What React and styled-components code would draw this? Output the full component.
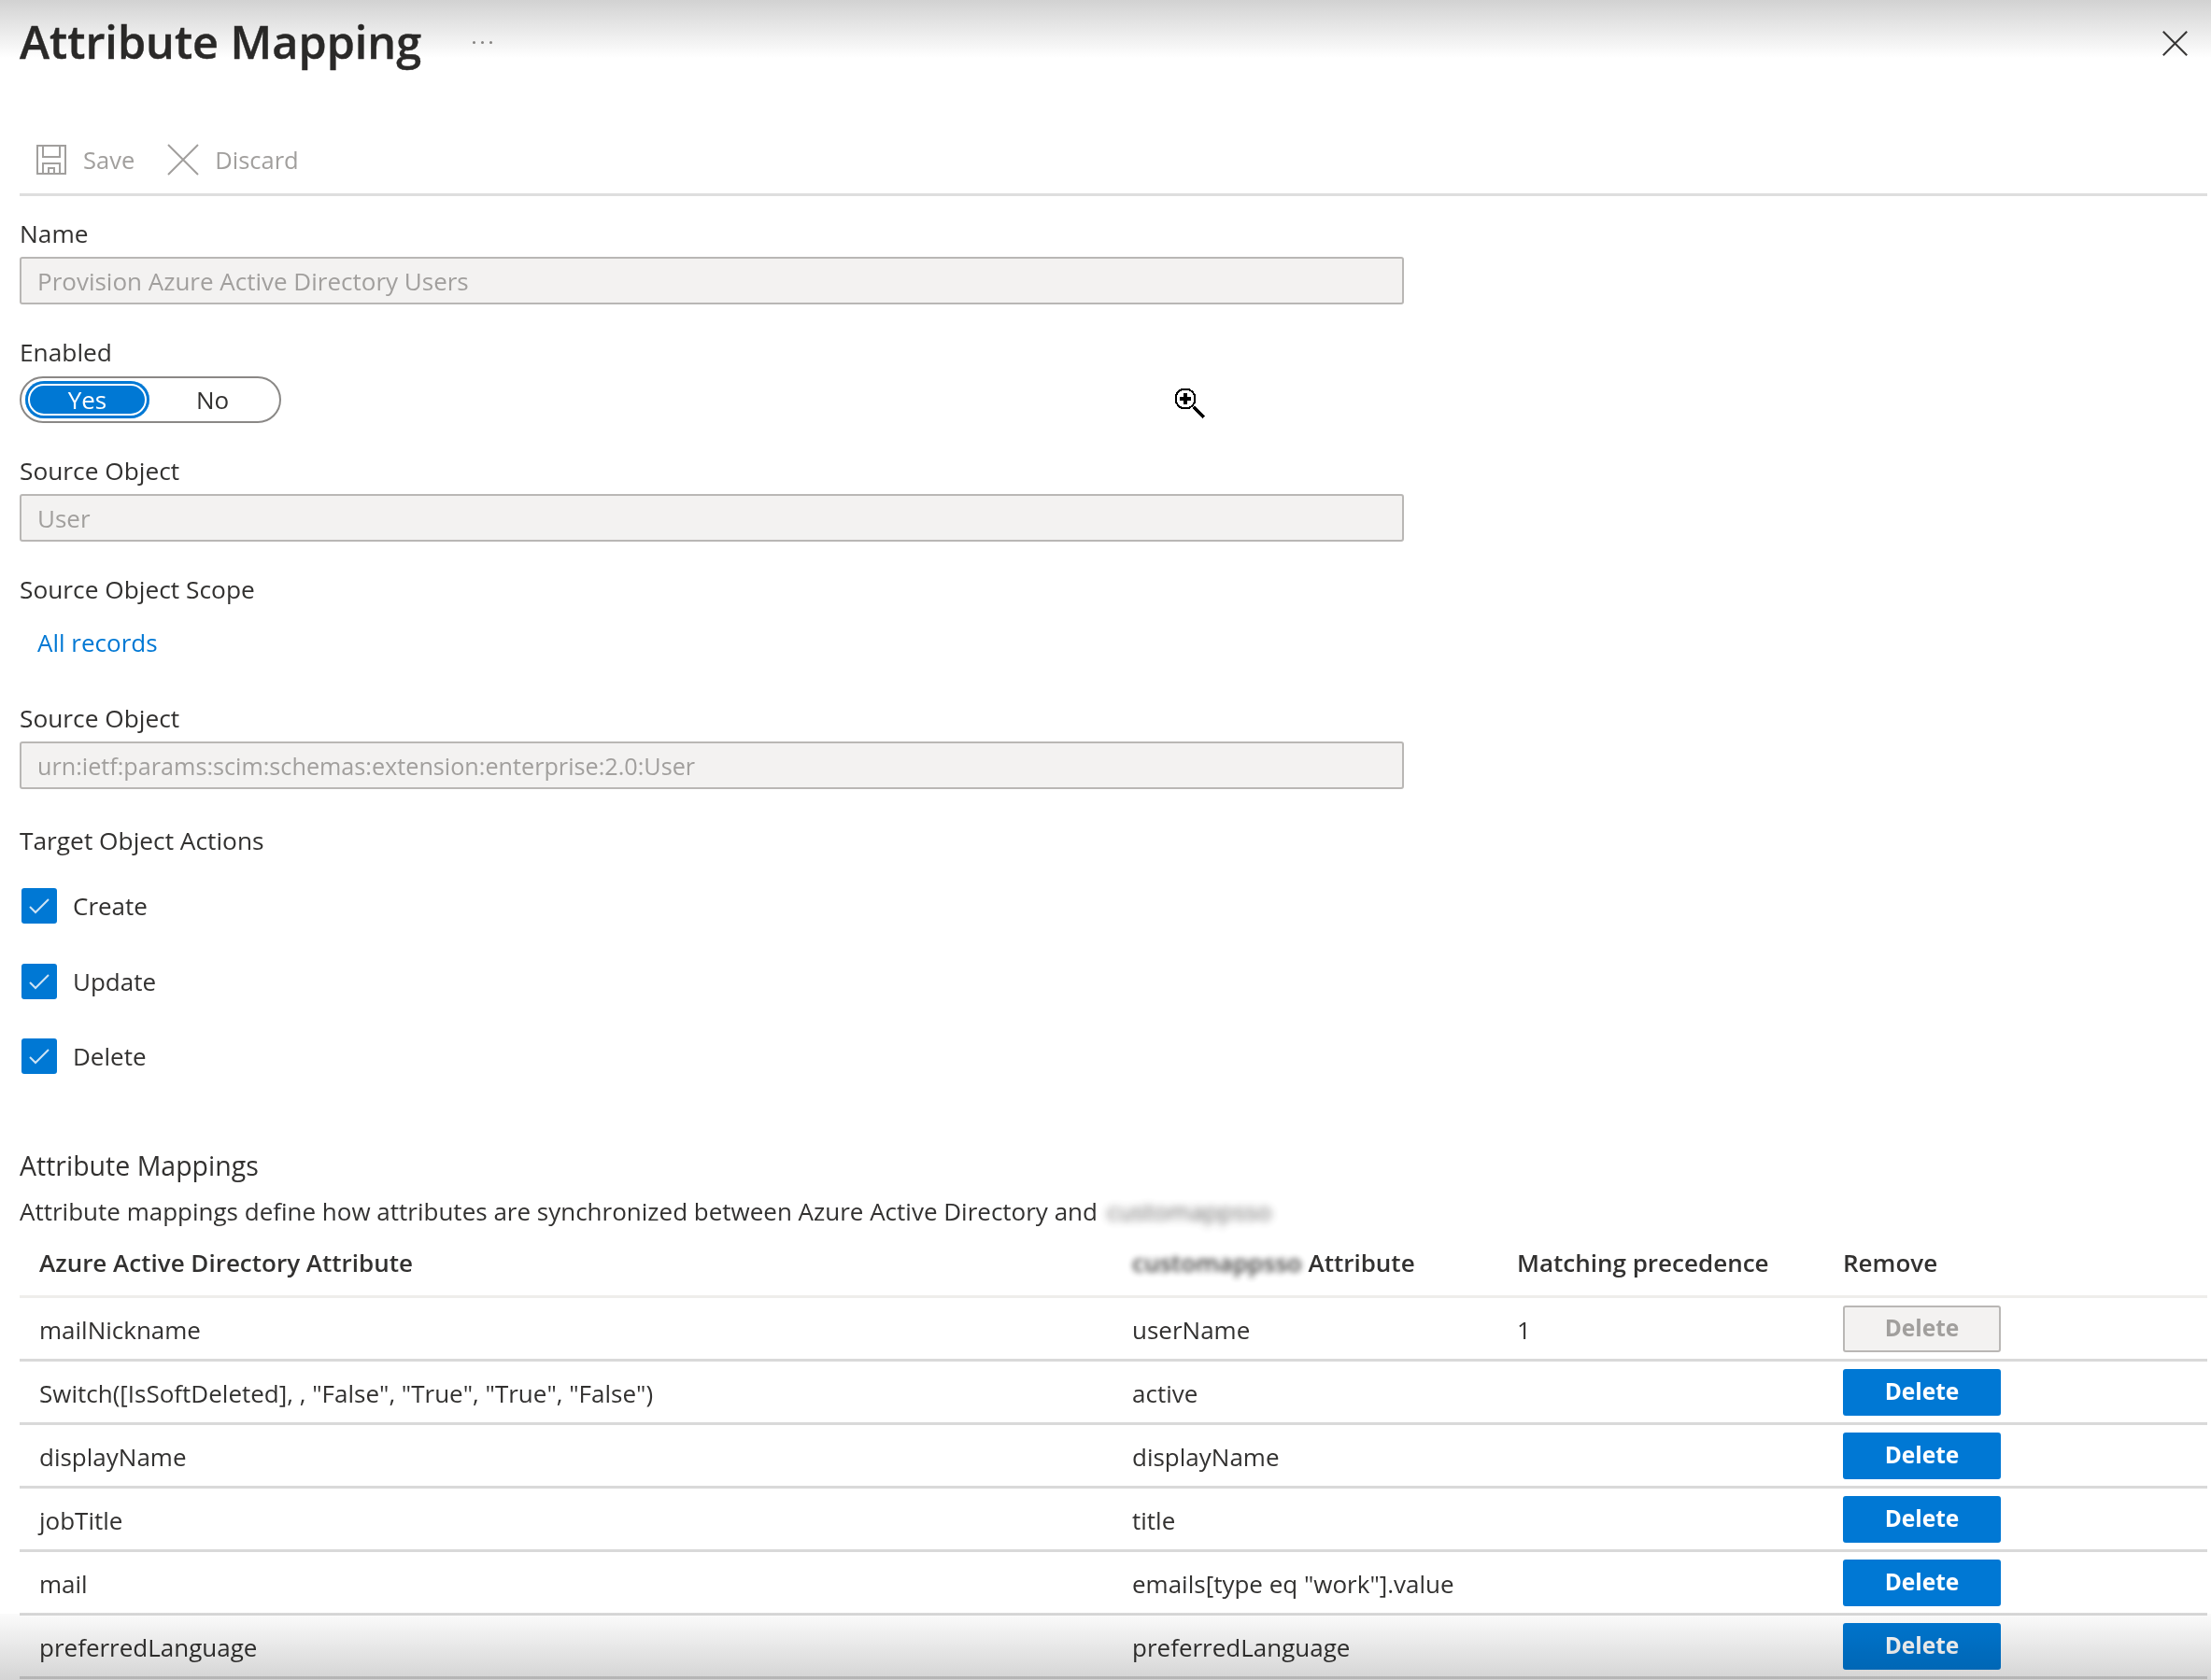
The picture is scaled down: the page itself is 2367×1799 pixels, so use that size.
import React from 'react';
import styled, { createGlobalStyle } from 'styled-components';

const GlobalStyle = createGlobalStyle`
  html, body {
    margin: 0;
    padding: 0;
    background: #fff;
    overflow: hidden;
  }
`;

const Screen = styled.div`
  position: relative;
  width: 2367px;
  height: 1799px;
  overflow: hidden;
  background: #fff;
  font-family: "Open Sans", "Noto Sans", sans-serif;
  font-size: 26px;
  line-height: 34px;
  color: #323130;
`;

const Page = styled.div`
  display: flex;
  flex-direction: column;
  padding: 0 4px 0 21px;
  filter: blur(0.6px);
`;

const Header = styled.header`
  display: flex;
  align-items: center;
  height: 92px;
`;

const Title = styled.h1`
  margin: 0 0 3px;
  font-size: 48.5px;
  line-height: 89px;
  font-weight: 600;
  color: #2b2a29;
  -webkit-text-stroke: 0.4px #2b2a29;
`;

const MoreDots = styled.span`
  margin-left: 55px;
  margin-top: -2px;
  display: flex;
  gap: 6px;

  i {
    width: 3px;
    height: 3px;
    background: #8a8886;
    border-radius: 50%;
  }
`;

const CloseButton = styled.button`
  margin-left: auto;
  margin-right: 21px;
  padding: 0;
  border: 0;
  background: none;
  display: flex;
  color: #3b3a39;
`;

const Toolbar = styled.div`
  display: flex;
  align-items: flex-end;
  height: 118px;
  padding: 0 0 19px 17px;
  box-sizing: border-box;
  border-bottom: 3px solid #dedede;
`;

const ToolButton = styled.span`
  display: flex;
  align-items: center;
  gap: 17px;
  margin-right: 35px;
  color: #a19f9d;
  font-size: 25.5px;
`;

const Field = styled.div`
  display: flex;
  flex-direction: column;
  margin-top: ${(p) => p.$top}px;
`;

const Label = styled.label`
  display: block;
  height: 34px;
  font-size: 26.3px;
`;

const ReadOnlyInput = styled.div`
  box-sizing: border-box;
  width: 1482px;
  height: 51px;
  margin-top: 8px;
  padding: 0 17px;
  display: flex;
  align-items: center;
  background: #f3f2f1;
  border: 2px solid #b9b7b5;
  border-radius: 3px;
  color: #a19f9d;
  font-size: ${(p) => p.$size || 26}px;
`;

const Toggle = styled.div`
  box-sizing: border-box;
  display: flex;
  align-items: center;
  width: 280px;
  height: 50px;
  margin-top: 9px;
  padding: 0 4px;
  border: 2px solid #8a8886;
  border-radius: 25px;
`;

const ToggleOption = styled.span`
  box-sizing: border-box;
  display: flex;
  align-items: center;
  justify-content: center;
  width: ${(p) => (p.$on ? 134 : 136)}px;
  height: 40px;
  border-radius: 20px;
  color: ${(p) => (p.$on ? '#fff' : '#323130')};
  background: ${(p) => (p.$on ? '#0078d4' : 'transparent')};
  box-shadow: ${(p) => (p.$on ? 'inset 0 0 0 3px #0078d4, inset 0 0 0 5px #fff' : 'none')};
`;

const ScopeLink = styled.a`
  display: block;
  margin: 23px 0 0 19px;
  color: #0078d4;
  height: 34px;
`;

const CheckRow = styled.div`
  display: flex;
  align-items: center;
  gap: 17px;
  height: 38px;
  margin: ${(p) => p.$top}px 0 0 2px;
`;

const CheckBox = styled.span`
  display: flex;
  align-items: center;
  justify-content: center;
  width: 38px;
  height: 38px;
  background: #0078d4;
  border-radius: 3px;
`;

const SectionTitle = styled.div`
  margin-top: 81px;
  font-size: 28.5px;
`;

const Description = styled.div`
  display: flex;
  margin-top: 15px;
`;

const Redacted = styled.span`
  margin-left: ${(p) => p.$left}px;
  filter: blur(${(p) => p.$blur}px);
  opacity: ${(p) => p.$opacity};
`;

const TableRow = styled.div`
  display: grid;
  grid-template-columns: 1170px 412px 349px 1fr;
  align-items: center;
  box-sizing: border-box;
  height: ${(p) => (p.$head ? 74 : 68)}px;
  margin-top: ${(p) => (p.$head ? 2 : 0)}px;
  padding-left: 21px;
  border-bottom: 3px solid ${(p) => (p.$head ? '#eeedeb' : '#d9d9d9')};
`;

const Cell = styled.div`
  padding-top: 2px;
`;

const HeadCell = styled.div`
  display: flex;
  padding-top: 1px;
  font-weight: 600;
  font-size: 26px;
`;

const DeleteButton = styled.button`
  box-sizing: border-box;
  width: 169px;
  height: 50px;
  padding: 0 0 2px;
  font: 700 24.5px/34px "Open Sans", sans-serif;
  border-radius: 3px;
  border: 2px solid ${(p) => (p.disabled ? '#b9b7b5' : '#0078d4')};
  background: ${(p) => (p.disabled ? '#f3f2f1' : '#0078d4')};
  color: ${(p) => (p.disabled ? '#a19f9d' : '#fff')};
`;

const TopShade = styled.div`
  position: absolute;
  inset: 0 0 auto 0;
  height: 62px;
  background: linear-gradient(#d2d2d2, #ffffff);
  mix-blend-mode: multiply;
  pointer-events: none;
`;

const BottomShade = styled.div`
  position: absolute;
  inset: auto 0 0 0;
  height: 71px;
  background: linear-gradient(#fbfbfb, #d4d4d4);
  mix-blend-mode: multiply;
  pointer-events: none;
`;

const ZoomCursor = styled.svg`
  position: absolute;
  left: 1257px;
  top: 415px;
`;

const SaveIcon = () => (
  <svg width="34" height="34" viewBox="0 0 34 34" fill="none" stroke="#a19f9d" strokeWidth="2">
    <path d="M2 2h30v30H2z" />
    <path d="M8 2v12h18V2" />
    <path d="M8 32V21h18v11M14 32v-6h6v6" />
  </svg>
);

const CrossIcon = ({ size, color, width }) => (
  <svg width={size} height={size} viewBox="0 0 34 34" fill="none" stroke={color} strokeWidth={width}>
    <path d="M1 1l32 32M33 1L1 33" />
  </svg>
);

const CheckMark = () => (
  <svg width="24" height="20" viewBox="0 0 24 20" fill="none" stroke="#cfe4f5" strokeWidth="2">
    <path d="M2 11l6 6L22 3" />
  </svg>
);

const rows = [
  ['mailNickname', 'userName', '1', true],
  ['Switch([IsSoftDeleted], , "False", "True", "True", "False")', 'active', '', false],
  ['displayName', 'displayName', '', false],
  ['jobTitle', 'title', '', false],
  ['mail', 'emails[type eq "work"].value', '', false],
  ['preferredLanguage', 'preferredLanguage', '', false],
];

const actions = [
  ['Create', 34],
  ['Update', 43],
  ['Delete', 42],
];

export default function App() {
  return (
    <Screen>
      <GlobalStyle />
      <Page>
        <Header>
          <Title>Attribute Mapping</Title>
          <MoreDots><i /><i /><i /></MoreDots>
          <CloseButton aria-label="Close"><CrossIcon size={27} color="#3b3a39" width={2.6} /></CloseButton>
        </Header>
        <Toolbar>
          <ToolButton><SaveIcon />Save</ToolButton>
          <ToolButton><CrossIcon size={34} color="#a19f9d" width={2} />Discard</ToolButton>
        </Toolbar>
        <Field $top={23}>
          <Label>Name</Label>
          <ReadOnlyInput>Provision Azure Active Directory Users</ReadOnlyInput>
        </Field>
        <Field $top={34}>
          <Label>Enabled</Label>
          <Toggle>
            <ToggleOption $on>Yes</ToggleOption>
            <ToggleOption>No</ToggleOption>
          </Toggle>
        </Field>
        <Field $top={34}>
          <Label>Source Object</Label>
          <ReadOnlyInput>User</ReadOnlyInput>
        </Field>
        <Field $top={34}>
          <Label>Source Object Scope</Label>
          <ScopeLink>All records</ScopeLink>
        </Field>
        <Field $top={47}>
          <Label>Source Object</Label>
          <ReadOnlyInput $size={25.2}>urn:ietf:params:scim:schemas:extension:enterprise:2.0:User</ReadOnlyInput>
        </Field>
        <Field $top={38}>
          <Label>Target Object Actions</Label>
          {actions.map(([name, top]) => (
            <CheckRow key={name} $top={top}>
              <CheckBox><CheckMark /></CheckBox>
              {name}
            </CheckRow>
          ))}
        </Field>
        <SectionTitle>Attribute Mappings</SectionTitle>
        <Description>
          Attribute mappings define how attributes are synchronized between Azure Active Directory and
          <Redacted $left={10} $blur={4} $opacity={0.75}>customappsso</Redacted>
        </Description>
        <TableRow $head>
          <HeadCell>Azure Active Directory Attribute</HeadCell>
          <HeadCell>
            <Redacted $left={0} $blur={3} $opacity={0.95}>customappsso</Redacted>&nbsp;Attribute
          </HeadCell>
          <HeadCell>Matching precedence</HeadCell>
          <HeadCell>Remove</HeadCell>
        </TableRow>
        {rows.map(([source, target, order, locked]) => (
          <TableRow key={source}>
            <Cell>{source}</Cell>
            <Cell>{target}</Cell>
            <Cell>{order}</Cell>
            <div><DeleteButton disabled={locked}>Delete</DeleteButton></div>
          </TableRow>
        ))}
      </Page>
      <TopShade />
      <BottomShade />
      <ZoomCursor width="34" height="34" viewBox="0 0 34 34" fill="none" shapeRendering="crispEdges">
        <circle cx="12" cy="12" r="10.5" stroke="#000" strokeWidth="2" />
        <path d="M6 12h12M12 6v12" stroke="#000" strokeWidth="4" />
        <path d="M21 21l11 11" stroke="#000" strokeWidth="4" />
      </ZoomCursor>
    </Screen>
  );
}
